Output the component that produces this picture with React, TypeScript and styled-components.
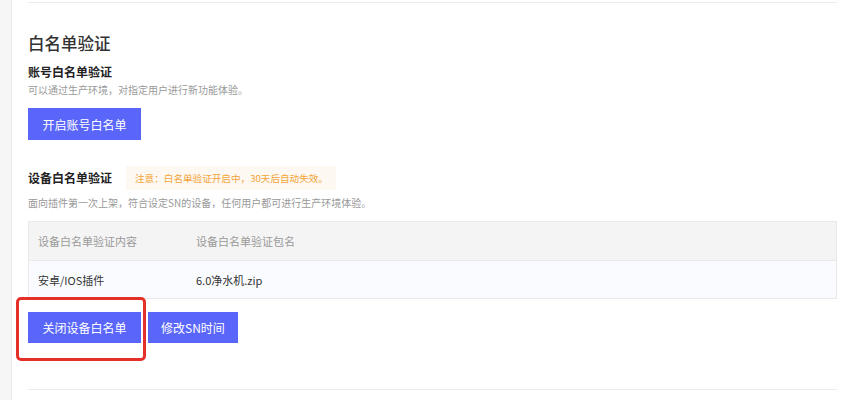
import React from "react";
import styled, { createGlobalStyle } from "styled-components";

const Global = createGlobalStyle`
  html, body { margin: 0; padding: 0; background: #fff; }
  body { font-family: "Noto Sans CJK SC", "Noto Sans", "Liberation Sans", sans-serif; }
`;

const Page = styled.div`
  display: flex;
  width: 852px;
  height: 400px;
  overflow: hidden;
`;

const Sidebar = styled.aside`
  width: 11px;
  flex: none;
  background: #f6f6f6;
  border-right: 1px solid #e9e9e9;
`;

const Main = styled.main`
  flex: 1;
  padding: 0 15px 0 16px;
  display: flex;
  flex-direction: column;
`;

const Divider = styled.div<{ $top: number }>`
  height: 1px;
  background: #ebebeb;
  margin-top: ${(p) => p.$top}px;
  flex: none;
`;

const Title = styled.h2`
  margin: 28px 0 0;
  font-size: 16.5px;
  line-height: 24px;
  font-weight: 500;
  color: #333;
`;

const SubTitle = styled.h3<{ $top?: number }>`
  margin: ${(p) => p.$top ?? 0}px 0 0;
  font-size: 12px;
  line-height: 18px;
  font-weight: 700;
  color: #222;
`;

const Desc = styled.p<{ $top: number }>`
  margin: ${(p) => p.$top}px 0 0;
  font-size: 10px;
  line-height: 16px;
  color: #999;
`;

const Button = styled.button<{ $pad?: number }>`
  height: 32px;
  padding: 0 ${(p) => p.$pad ?? 14.5}px;
  border: none;
  border-radius: 0;
  background: #5a66fa;
  color: #fff;
  font-family: inherit;
  font-size: 12px;
  cursor: pointer;
`;

const PrimaryWrap = styled.div`
  margin-top: 10px;
  display: flex;
`;

const DeviceHead = styled.div`
  margin-top: 26px;
  height: 24px;
  display: flex;
  align-items: center;
`;

const Notice = styled.span`
  margin-left: 14px;
  height: 24px;
  padding: 0 8px 0 9px;
  display: flex;
  align-items: center;
  background: #fdf8f1;
  color: #f3a43a;
  font-size: 9.6px;
`;

const Table = styled.table`
  margin-top: 10px;
  width: 100%;
  border-collapse: collapse;
  border: 1px solid #e9e9e9;
  font-size: 11px;
`;

const HeadCell = styled.th<{ $w?: number }>`
  height: 38px;
  padding: 0 9px;
  text-align: left;
  font-weight: 400;
  color: #999;
  background: #f4f4f4;
  border-bottom: 1px solid #e9e9e9;
  width: ${(p) => (p.$w ? `${p.$w}px` : "auto")};
`;

const Cell = styled.td`
  height: 37px;
  padding: 0 9px;
  color: #333;
  background: #fafbfe;
`;

const Actions = styled.div`
  position: relative;
  margin-top: 13px;
  display: flex;
  gap: 7px;
`;

const ActionButton = styled(Button)`
  height: 31px;
`;

const Highlight = styled.div`
  position: absolute;
  left: -12px;
  top: -15px;
  width: 130px;
  height: 64px;
  box-sizing: border-box;
  border: 3px solid #e5302a;
  border-radius: 5px;
  pointer-events: none;
`;

export default function App() {
  return (
    <>
      <Global />
      <Page>
        <Sidebar />
        <Main>
          <Divider $top={2} />
          <Title>白名单验证</Title>
          <SubTitle $top={8}>账号白名单验证</SubTitle>
          <Desc $top={1}>可以通过生产环境，对指定用户进行新功能体验。</Desc>
          <PrimaryWrap>
            <Button>开启账号白名单</Button>
          </PrimaryWrap>
          <DeviceHead>
            <SubTitle>设备白名单验证</SubTitle>
            <Notice>注意：白名单验证开启中，30天后自动失效。</Notice>
          </DeviceHead>
          <Desc $top={5}>面向插件第一次上架，符合设定SN的设备，任何用户都可进行生产环境体验。</Desc>
          <Table>
            <thead>
              <tr>
                <HeadCell $w={140}>设备白名单验证内容</HeadCell>
                <HeadCell>设备白名单验证包名</HeadCell>
              </tr>
            </thead>
            <tbody>
              <tr>
                <Cell>安卓/IOS插件</Cell>
                <Cell>6.0净水机.zip</Cell>
              </tr>
            </tbody>
          </Table>
          <Actions>
            <ActionButton>关闭设备白名单</ActionButton>
            <ActionButton $pad={13}>修改SN时间</ActionButton>
            <Highlight />
          </Actions>
          <Divider $top={46} />
        </Main>
      </Page>
    </>
  );
}
